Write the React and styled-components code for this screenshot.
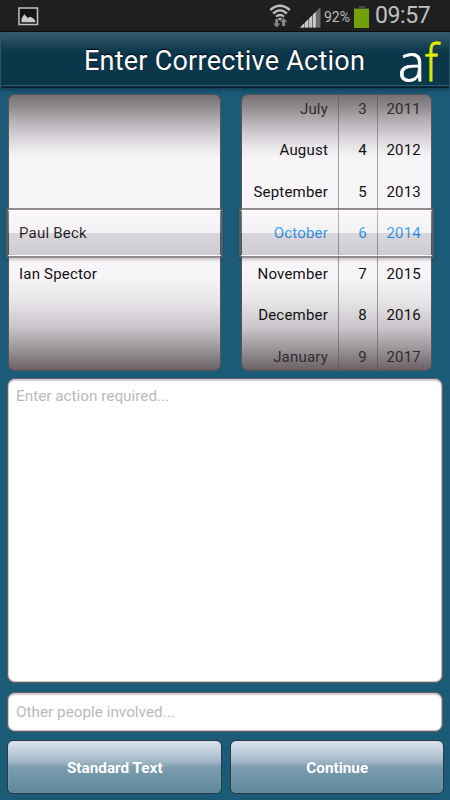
import styled, { createGlobalStyle } from "styled-components";

const people = ["", "", "", "Paul Beck", "Ian Spector", "", ""];
const months = ["July", "August", "September", "October", "November", "December", "January"];
const days = ["3", "4", "5", "6", "7", "8", "9"];
const years = ["2011", "2012", "2013", "2014", "2015", "2016", "2017"];

const App = () => {
  return (
    <Screen>
      <GlobalStyle />
      <StatusBar>
        <PictureIcon />
        <StatusRight>
          <WifiIcon />
          <SignalIcon />
          <Percent>92%</Percent>
          <Battery />
          <Clock>09:57</Clock>
        </StatusRight>
      </StatusBar>

      <Header>
        <Title>Enter Corrective Action</Title>
        <Logo>
          a<span>f</span>
        </Logo>
      </Header>

      <Pickers>
        <Picker $width={213}>
          <Wheel>
            <Column items={people} $width={211} $left />
          </Wheel>
          <Selection />
        </Picker>
        <Picker $width={191}>
          <Wheel>
            <Column items={months} $width={96} $pad={10} $active />
            <Column items={days} $width={39} $pad={10} $active />
            <Column items={years} $width={54} $pad={10} $active />
          </Wheel>
          <Selection />
        </Picker>
      </Pickers>

      <ActionInput placeholder="Enter action required..." spellCheck={false} />
      <PeopleInput placeholder="Other people involved..." />

      <Buttons>
        <Button>Standard Text</Button>
        <Button>Continue</Button>
      </Buttons>
    </Screen>
  );
};

export default App;

const Column = ({ items, $width, $pad, $left, $active }) => (
  <WheelColumn $width={$width}>
    {items.map((item, i) => (
      <Item key={i} $left={$left} $pad={$pad} $active={$active && i === 3}>
        {item}
      </Item>
    ))}
  </WheelColumn>
);

//icons
const PictureIcon = () => (
  <svg width="21" height="19" viewBox="0 0 21 19">
    <rect x="1" y="1" width="18.5" height="16.5" fill="#141414" stroke="#c4c4c4" strokeWidth="1.5" />
    <path d="M3.5 15.3V11.5L6.3 7.2L8 9L9.8 11L12 9.8L14 10.6L16 12L17.3 14V15.3Z" fill="#c9c9c9" />
  </svg>
);

const WifiIcon = () => (
  <svg width="23" height="24" viewBox="0 0 23 24">
    <g fill="none" stroke="#bcbcbc" strokeWidth="2.4">
      <path d="M0.2 6Q10 -2.6 19.8 6" />
      <path d="M3.1 9.5Q10 3.2 16.9 9.5" />
      <path d="M6 12.7Q10 9.2 14 12.7" />
    </g>
    <path d="M7.8 14.6Q10 12.8 12.2 14.6L10 16.8Z" fill="#bcbcbc" />
    <path d="M5.2 15H8.2V19.6H10.3L6.7 23.5L3 19.6H5.2Z" fill="#858585" />
    <path d="M12 22V18H10.2L13.7 14L17.3 18H15.2V22Z" fill="#858585" />
  </svg>
);

const SignalIcon = () => (
  <svg width="21" height="21" viewBox="0 0 21 21">
    <path d="M0 20.5L20.5 0V20.5Z" fill="#6a6a6a" />
    <path d="M0 20.5L4.2 16.3V20.5ZM5 20.5V15.5L8.2 12.3V20.5ZM9.2 20.5V11.3L12 8.5V20.5ZM13 20.5V7.5L15.8 4.7V20.5Z" fill="#c9c9c9" />
  </svg>
);

const GlobalStyle = createGlobalStyle`
  * {
    box-sizing: border-box;
  }
  body {
    margin: 0;
    background: #1b5b78;
    font-family: Roboto, "Liberation Sans", sans-serif;
  }
`;

const Screen = styled.div`
  width: 450px;
  height: 800px;
  overflow: hidden;
  background: #1b5b78;
`;

//status bar
const StatusBar = styled.div`
  display: flex;
  justify-content: space-between;
  height: 32px;
  padding: 7px 19px 0 18px;
  background: #1f1f1f;
  border-bottom: 1px solid #0b0f12;
`;

const StatusRight = styled.div`
  display: flex;
  align-items: flex-start;
  height: 24px;
  margin-top: -3px;

  svg:last-of-type {
    margin: 3px 3px 0 7px;
  }
`;

const Percent = styled.span`
  width: 27px;
  margin-top: 5px;
  color: #bdbdbd;
  font-size: 14px;
  line-height: 16px;
`;

const Battery = styled.span`
  width: 15px;
  height: 19px;
  margin: 5px 6px 0 3px;
  background: #72a009;
  box-shadow: 0 -1px 0 #3e4b24;

  &::before {
    content: "";
    display: block;
    width: 6px;
    height: 3px;
    margin: -3px auto 0;
    background: #484848;
  }
`;

const Clock = styled.span`
  width: 56px;
  color: #c0c0c0;
  font-size: 23px;
  line-height: 24px;
  letter-spacing: -0.4px;
`;

//header
const Header = styled.header`
  position: relative;
  height: 56px;
  background: linear-gradient(#345b6c 0, #234c5e 8px, #103b4e 17px, #0b364a 22px, #0b384b 54px);
  border: solid #2c5567;
  border-width: 1px 1px 0;
  box-shadow: inset 0 -1px 0 #08202b, inset 0 -2px 0 #0b2f40, inset 0 -3px 0 #2c5a6e, 0 2px 4px rgba(8, 40, 56, 0.6);
`;

const Title = styled.h1`
  margin: 0;
  padding: 1px 1px 0 0;
  color: #fff;
  font-size: 27px;
  font-weight: 400;
  line-height: 54px;
  letter-spacing: 0.25px;
  text-align: center;
  white-space: nowrap;
  text-shadow: 0 -1px 1px #001;
`;

const Logo = styled.div`
  position: absolute;
  top: 1px;
  left: 397px;
  color: #fff;
  font-family: "Open Sans", sans-serif;
  font-size: 51px;
  font-weight: 300;
  line-height: 54px;
  white-space: nowrap;
  -webkit-text-stroke: 0.8px currentColor;

  span {
    display: inline-block;
    color: #e2ec00;
    transform: scaleX(0.84);
    transform-origin: left;
  }
`;

//pickers
const Pickers = styled.div`
  display: flex;
  gap: 20px;
  height: 290px;
  padding: 6px 0 0 8px;
`;

const Picker = styled.div`
  position: relative;
  width: ${(props) => props.$width}px;
  height: 277px;
`;

const Wheel = styled.div`
  display: flex;
  align-items: center;
  height: 277px;
  overflow: hidden;
  border: 1px solid #5c5456;
  border-radius: 7px;
  background: linear-gradient(
    #777174 0,
    #8f8a8d 12px,
    #afaaae 24px,
    #cfcad0 38px,
    #e9e6ea 52px,
    #f8f5f9 64px,
    #f8f5f9 182px,
    #e6e3e7 208px,
    #c8c4c9 233px,
    #979396 255px,
    #696165 275px
  );
`;

const WheelColumn = styled.div`
  flex-shrink: 0;
  width: ${(props) => props.$width}px;

  & + & {
    border-left: 1px solid rgba(80, 76, 82, 0.5);
  }
`;

const Item = styled.div`
  height: 41.3px;
  padding: ${(props) => (props.$left ? "0 0 0 10px" : `0 ${props.$pad}px 0 0`)};
  color: ${(props) => (props.$active ? "#1597f5" : "#111")};
  font-size: 15px;
  line-height: 42px;
  letter-spacing: 0.2px;
  text-align: ${(props) => (props.$left ? "left" : "right")};

  &:first-child,
  &:last-child {
    color: #302c2e;
  }
`;

const Selection = styled.div`
  position: absolute;
  top: 114px;
  left: -2px;
  right: -2px;
  height: 50px;
  border: 2px solid rgba(105, 98, 102, 0.72);
  background: linear-gradient(rgba(255, 255, 255, 0.25) 0, rgba(225, 220, 225, 0.15) 23px, rgba(85, 80, 88, 0.18) 23px, rgba(85, 80, 88, 0.25) 46px);
  background-clip: padding-box;
  box-shadow: inset 0 1px 0 rgba(255, 255, 255, 0.8), inset 0 -1px 0 #fff, 0 2px 3px rgba(0, 0, 0, 0.2);
`;

//inputs
const ActionInput = styled.textarea`
  display: block;
  width: 436px;
  height: 305px;
  margin: 0 7px;
  padding: 8px;
  border: 1px solid #655d61;
  border-radius: 8px;
  outline: none;
  resize: none;
  background: #fff;
  box-shadow: inset 0 2px 1px #d0cbd0, inset 0 -1px 0 #c8c4c8, inset 1px 0 0 #d0ccd0, inset -1px 0 0 #c0bcc0;
  font-family: inherit;
  font-size: 15.3px;
  line-height: 19px;

  &::placeholder {
    color: #bcb8bb;
  }
`;

const PeopleInput = styled(ActionInput).attrs({ as: "input" })`
  height: 40px;
  margin-top: 9px;
  padding: 0 8px;
`;

//buttons
const Buttons = styled.div`
  display: flex;
  gap: 8px;
  padding: 8px 6px 0 7px;
`;

const Button = styled.button`
  flex: 1;
  height: 54px;
  padding: 1px 0 0 1px;
  border: 1px solid #263a46;
  border-radius: 6px;
  background: linear-gradient(#dce2ed 0, #bccbd9 12px, #9bb1c2 22px, #7c9daf 26px, #7095a8 36px, #5e8799 52px);
  box-shadow: inset 0 0 1px #b4c5d1;
  color: #fff;
  font-family: inherit;
  font-size: 15.3px;
  font-weight: 700;
`;
